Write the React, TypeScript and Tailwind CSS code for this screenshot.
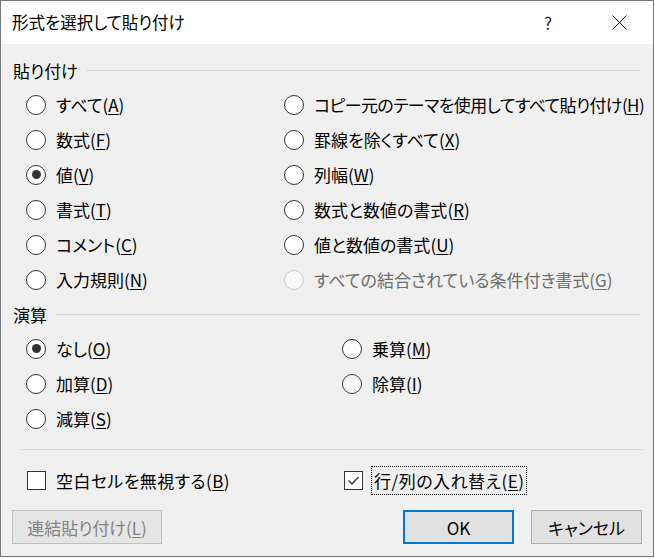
import React from 'react';

interface OptionProps {
  label: string;
  keyChar: string;
  checked?: boolean;
  disabled?: boolean;
  tight?: boolean;
}

function Radio({ label, keyChar, checked, disabled, tight }: OptionProps) {
  return (
    <div className="flex items-center h-[35px]">
      <span
        className={`w-[20px] h-[20px] rounded-full border flex items-center justify-center shrink-0 ${
          disabled ? 'border-[#cccccc] bg-[#f8f8f8]' : 'border-[#333333] bg-white'
        }`}
      >
        {checked && <span className="w-[9px] h-[9px] rounded-full bg-[#333333]" />}
      </span>
      <span
        className={`ml-[10px] text-[17px] leading-none whitespace-nowrap ${
          disabled ? 'text-[#6d6d6d]' : 'text-black'
        } ${tight ? 'tracking-[-0.6px]' : ''}`}
      >
        {label}(<u className="underline-offset-2">{keyChar}</u>)
      </span>
    </div>
  );
}

function GroupHeader({ title }: { title: string }) {
  return (
    <div className="flex items-center h-[24px] pl-[12px] pr-[12px]">
      <span className="text-[17px] leading-none text-black whitespace-nowrap">{title}</span>
      <span className="flex-1 h-px bg-[#dadada] ml-[8px]" />
    </div>
  );
}

function Checkbox({ checked }: { checked?: boolean }) {
  return (
    <span className="w-[19px] h-[19px] border border-[#333333] bg-white flex items-center justify-center shrink-0">
      {checked && (
        <svg width="13" height="13" viewBox="0 0 13 13">
          <path d="M1.5 6.5 L5 10 L11.5 3" fill="none" stroke="#333" strokeWidth="1.4" />
        </svg>
      )}
    </span>
  );
}

export default function App() {
  return (
    <div className="w-[654px] h-[557px] border border-[#767676] bg-[#f0f0f0] flex flex-col text-black font-['Noto_Sans_CJK_JP','Noto_Sans',sans-serif] [font-feature-settings:'palt']">
      {/* title bar */}
      <div className="h-[43px] bg-white flex items-center shrink-0">
        <span className="pl-[11px] text-[16.5px] leading-none">形式を選択して貼り付け</span>
        <span className="ml-auto text-[17px] leading-none text-[#222] mr-[60px]">?</span>
        <svg width="15" height="15" viewBox="0 0 15 15" className="mr-[26px]">
          <path d="M0.5 0.5 L14.5 14.5 M14.5 0.5 L0.5 14.5" stroke="#111" strokeWidth="1" />
        </svg>
      </div>

      {/* paste group */}
      <div className="mt-[14px]">
        <GroupHeader title="貼り付け" />
      </div>
      <div className="grid grid-cols-[258px_1fr] pl-[25px] mt-[5px]">
        <div className="flex flex-col">
          <Radio label="すべて" keyChar="A" />
          <Radio label="数式" keyChar="F" />
          <Radio label="値" keyChar="V" checked />
          <Radio label="書式" keyChar="T" />
          <Radio label="コメント" keyChar="C" />
          <Radio label="入力規則" keyChar="N" />
        </div>
        <div className="flex flex-col">
          <Radio label="コピー元のテーマを使用してすべて貼り付け" keyChar="H" tight />
          <Radio label="罫線を除くすべて" keyChar="X" />
          <Radio label="列幅" keyChar="W" />
          <Radio label="数式と数値の書式" keyChar="R" />
          <Radio label="値と数値の書式" keyChar="U" />
          <Radio label="すべての結合されている条件付き書式" keyChar="G" disabled />
        </div>
      </div>

      {/* operation group */}
      <div className="mt-[5px]">
        <GroupHeader title="演算" />
      </div>
      <div className="grid grid-cols-[316px_1fr] pl-[25px] mt-[5px]">
        <div className="flex flex-col">
          <Radio label="なし" keyChar="O" checked />
          <Radio label="加算" keyChar="D" />
          <Radio label="減算" keyChar="S" />
        </div>
        <div className="flex flex-col">
          <Radio label="乗算" keyChar="M" />
          <Radio label="除算" keyChar="I" />
        </div>
      </div>

      <div className="h-px bg-[#dadada] ml-[20px] mr-[10px] mt-[13px]" />

      {/* options */}
      <div className="grid grid-cols-[317px_1fr] pl-[26px] mt-[16px] h-[28px] items-center">
        <div className="flex items-center">
          <Checkbox />
          <span className="ml-[10px] text-[17px] leading-none whitespace-nowrap tracking-[0.4px]">
            空白セルを無視する(<u className="underline-offset-2">B</u>)
          </span>
        </div>
        <div className="flex items-center">
          <Checkbox checked />
          <span className="ml-[8px] border border-dotted border-black px-[2px] py-[5px] text-[17px] leading-none whitespace-nowrap tracking-[0.5px]">
            行/列の入れ替え(<u className="underline-offset-2">E</u>)
          </span>
        </div>
      </div>

      {/* buttons */}
      <div className="flex items-center px-[11px] mt-[16px]">
        <button className="w-[150px] h-[34px] border border-[#bfbfbf] bg-[#e5e5e5] text-[17px] text-[#838383] leading-none">
          連結貼り付け(<u className="underline-offset-2">L</u>)
        </button>
        <button className="ml-auto w-[111px] h-[34px] border-2 border-[#0078d7] bg-[#e1e1e1] text-[17px] leading-none">
          OK
        </button>
        <button className="ml-[17px] w-[111px] h-[34px] border border-[#adadad] bg-[#e1e1e1] text-[17px] leading-none">
          キャンセル
        </button>
      </div>
    </div>
  );
}
